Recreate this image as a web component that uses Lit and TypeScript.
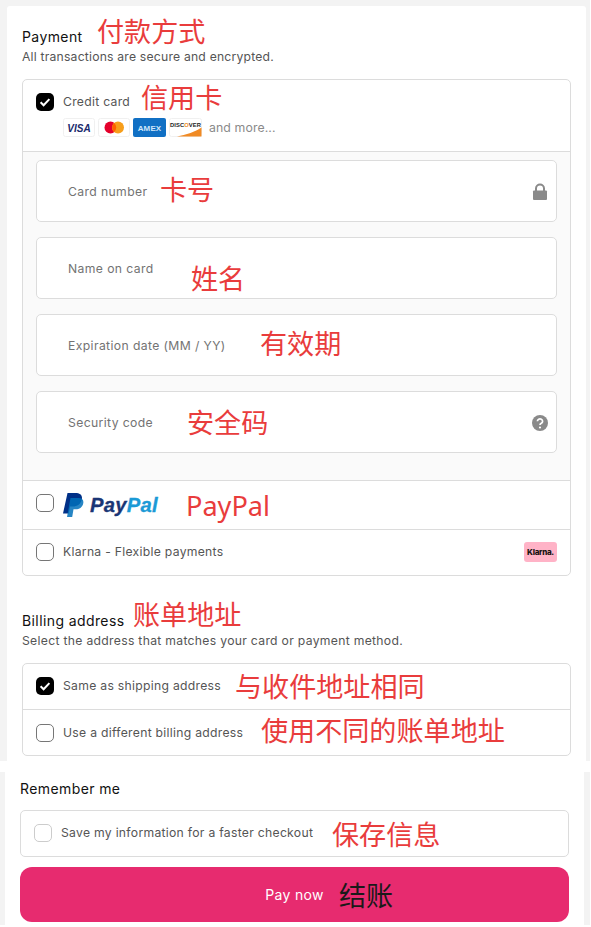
import { LitElement, html, css } from "lit";
import { customElement } from "lit/decorators.js";

const check = html`<svg viewBox="0 0 18 18" width="18" height="18"><rect width="18" height="18" rx="5" fill="#000"/><path d="M4.6 9.3l3 3 5.8-6.2" fill="none" stroke="#fff" stroke-width="2"/></svg>`;

@customElement("app-root")
export class AppRoot extends LitElement {
  static styles = css`
    :host { display: block; width: 591px; height: 927px; background: #fff; overflow: hidden;
      font-family: "Inter", "Noto Sans", sans-serif; color: #333; }
    * { box-sizing: border-box; }
    .wrap { background: #f3f3f3; width: 590px; }
    .top { padding: 6px 4px 0 7px; height: 761px; }
    .bottom { margin-top: 11px; padding: 0 6px 0 5px; height: 153px; }
    .panel { background: #fff; height: 100%; padding: 0 15px; }
    .top .panel { border-radius: 3px 3px 0 0; }
    .head { position: relative; font-size: 14px; color: #111; line-height: 16px; letter-spacing: .4px; }
    .sub { font-size: 12.2px; color: #555; line-height: 16px; margin-top: 4px; letter-spacing: .2px; }
    .sub.wide { letter-spacing: .3px; }
    .pay-head { padding-top: 23px; }
    .box { border: 1px solid #dcdcdc; border-radius: 5px; margin-top: 14px; overflow: hidden; }
    .row { position: relative; display: flex; align-items: center; gap: 9px; padding: 0 13px; font-size: 12.2px; color: #555; letter-spacing: .28px; }
    .row + .row, .row + .fields, .fields + .row { border-top: 1px solid #dcdcdc; }
    .cb { width: 18px; height: 18px; flex: none; display: block; }
    .cb.off { border: 1px solid #767676; border-radius: 5px; background: #fff; }
    .cb.faint { border-color: #ccc; }
    .credit { height: 71px; align-items: flex-start; padding-top: 13px; }
    .credit-text { display: flex; flex-direction: column; gap: 9px; padding-top: 1px; }
    .logos { display: flex; align-items: center; gap: 3px; color: #8a8a8a; font-size: 12.3px; letter-spacing: .1px; }
    .logos svg { display: block; }
    .logos span { margin-left: 4px; }
    .fields { background: #fafafa; padding: 8px 13px 27px; display: flex; flex-direction: column; gap: 15px; }
    .field { position: relative; height: 62px; background: #fff; border: 1px solid #dcdcdc; border-radius: 5px;
      display: flex; align-items: center; justify-content: space-between; padding: 1px 8px 0 31px; font-size: 12.2px; color: #737373; letter-spacing: .38px; }
    .paypal { height: 49px; }
    .paypal .cb { margin-top: -4px; }
    .klarna { height: 46px; justify-content: flex-start; padding-bottom: 2px; }
    .badge { margin-left: auto; width: 33px; height: 20px; border-radius: 3px; background: #ffb3c7; color: #17120f; font-size: 8px; font-weight: 800; display: flex; align-items: center; justify-content: center; letter-spacing: -.3px; }
    .bill-head { padding-top: 37px; }
    .bill-row { height: 46px; }
    .bill-row:first-child { height: 45px; padding-bottom: 2px; }
    .remember { padding-top: 9px; }
    .bottom .box { margin-top: 13px; }
    .save { height: 45px; padding-bottom: 2px; }
    .pay { margin-top: 10px; height: 55px; border-radius: 12px; background: #e72b6f; color: #fff; font-size: 14px; letter-spacing: .3px;
      display: flex; align-items: center; justify-content: center; position: relative; }
    .note { position: absolute; white-space: nowrap; color: #e93c3c; font-size: 27.1px; line-height: 34px; letter-spacing: 0;
      font-family: "Noto Sans", "Noto Sans CJK SC", sans-serif; font-weight: 400; }
    .n-black { color: #1a1a1a; }
  `;

  private note(text: string, left: number, top: number, black = false) {
    return html`<span class="note ${black ? "n-black" : ""}" style="left:${left}px;top:${top}px">${text}</span>`;
  }

  render() {
    return html`
      <div class="wrap top"><div class="panel">
        <div class="pay-head">
          <div class="head">Payment${this.note("付款方式", 75, -14)}</div>
          <div class="sub">All transactions are secure and encrypted.</div>
        </div>
        <div class="box">
          <div class="row credit">
            <span class="cb">${check}</span>
            <div class="credit-text">
              <div>Credit card</div>
              <div class="logos">
                <svg width="32" height="19" viewBox="0 0 32 19"><rect x=".5" y=".5" width="31" height="18" rx="2" fill="#fff" stroke="#f0f0f0"/><text x="16" y="13.500" text-anchor="middle" font-family="Liberation Sans" font-size="10" font-weight="700" font-style="italic" fill="#1a2a6c">VISA</text></svg>
                <svg width="32" height="19" viewBox="0 0 32 19"><rect x=".5" y=".5" width="31" height="18" rx="2" fill="#fff" stroke="#f0f0f0"/><circle cx="12.500" cy="9.500" r="6" fill="#e4002b"/><circle cx="20" cy="9.500" r="6" fill="#f79e1b"/><path d="M16.200 5a6 6 0 0 1 0 9 6 6 0 0 1 0-9z" fill="#ff5f00"/></svg>
                <svg width="33" height="19" viewBox="0 0 33 19"><rect width="33" height="19" rx="2" fill="#1170c4"/><text x="16.500" y="12.500" text-anchor="middle" font-family="Liberation Sans" font-size="8" font-weight="700" fill="#cfe6fa">AMEX</text></svg>
                <svg width="33" height="19" viewBox="0 0 33 19"><rect x=".5" y=".5" width="32" height="18" rx="2" fill="#fff" stroke="#f0f0f0"/><path d="M8 18.500Q25 15 32.500 9.500v9z" fill="#f08a24"/><text x="16.500" y="8.500" text-anchor="middle" font-family="Liberation Sans" font-size="5.800" font-weight="700" fill="#222">DISC<tspan fill="#f08a24">O</tspan>VER</text></svg>
                <span>and more...</span>
              </div>
            </div>
            ${this.note("信用卡", 118, 1)}
          </div>
          <div class="fields">
            <div class="field">Card number${this.note("卡号", 123, 12)}
              <svg width="16" height="18" viewBox="0 0 16 18"><path d="M4 8V5.500a4 4 0 0 1 8 0V8" fill="none" stroke="#8a8a8a" stroke-width="2"/><rect x="1" y="7.500" width="14" height="9.500" rx="1" fill="#8a8a8a"/></svg>
            </div>
            <div class="field">Name on card${this.note("姓名", 154, 24)}</div>
            <div class="field">Expiration date (MM / YY)${this.note("有效期", 223, 12)}</div>
            <div class="field">Security code${this.note("安全码", 150, 14)}
              <svg width="16" height="16" viewBox="0 0 16 16"><circle cx="8" cy="8" r="8" fill="#8a8a8a"/><path d="M5.400 6.200a2.600 2.400 0 1 1 3.900 2.100c-.9.500-1.300.9-1.300 1.800" fill="none" stroke="#fff" stroke-width="1.700"/><circle cx="8" cy="12.500" r="1.100" fill="#fff"/></svg>
            </div>
          </div>
          <div class="row paypal">
            <span class="cb off"></span>
            <svg width="96" height="24" viewBox="0 0 96 24">
              <path d="M4.500 0h8c4.500 0 7.300 2 6.300 6.500-1 4.800-4.500 7-9 7H7l-1.300 7H0z" fill="#003087"/>
              <path d="M7.500 5h8c3.500 0 5.500 1.700 4.700 5.500-.9 4-3.900 5.800-7.400 5.800H10.500l-1.300 7.700H4z" fill="#0070ba" opacity=".85"/>
              <text x="27" y="18.500" font-family="Liberation Sans" font-size="20.200" font-weight="700" font-style="italic" fill="#1a3575" stroke="#1a3575" stroke-width=".3">Pay<tspan fill="#1b9ad6" stroke="#1b9ad6">Pal</tspan></text>
            </svg>
            ${this.note("PayPal", 163, 8)}
          </div>
          <div class="row klarna">
            <span class="cb off"></span>
            <span>Klarna - Flexible payments</span>
            <span class="badge">Klarna.</span>
          </div>
        </div>
        <div class="bill-head">
          <div class="head">Billing address${this.note("账单地址", 111, -15)}</div>
          <div class="sub wide">Select the address that matches your card or payment method.</div>
        </div>
        <div class="box">
          <div class="row bill-row"><span class="cb">${check}</span><span>Same as shipping address</span>${this.note("与收件地址相同", 212, 6)}</div>
          <div class="row bill-row"><span class="cb off"></span><span>Use a different billing address</span>${this.note("使用不同的账单地址", 238, 4)}</div>
        </div>
      </div></div>
      <div class="wrap bottom"><div class="panel">
        <div class="remember"><div class="head">Remember me</div></div>
        <div class="box">
          <div class="row save"><span class="cb off faint"></span><span>Save my information for a faster checkout</span>${this.note("保存信息", 311, 7)}</div>
        </div>
        <div class="pay">Pay now${this.note("结账", 319, 12, true)}</div>
      </div></div>
    `;
  }
}
